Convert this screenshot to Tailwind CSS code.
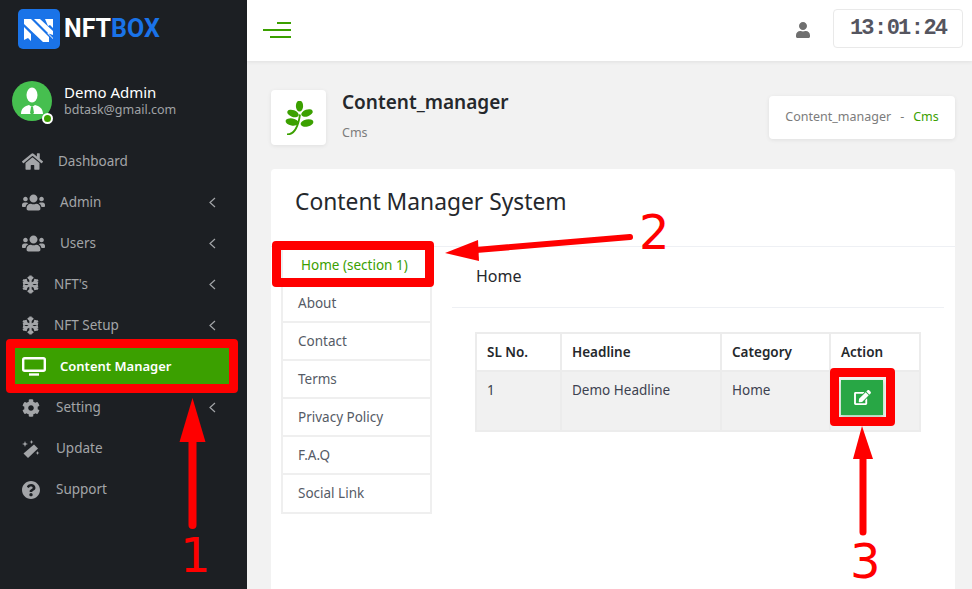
<!DOCTYPE html>
<html lang="en">
<head>
<meta charset="UTF-8">
<title>Content Manager</title>
<script src="https://cdn.jsdelivr.net/npm/@tailwindcss/browser@4"></script>
</head>
<body class="font-['Noto_Sans',sans-serif]">
<div class="relative flex h-[589px] w-[972px] overflow-hidden bg-[#f2f2f2]">

  <!-- sidebar -->
  <aside class="flex w-[247px] shrink-0 flex-col bg-[#1c1f23]">
    <div class="flex h-[61px] items-start pl-[18px] pt-[9px]">
      <svg width="42" height="40" viewBox="0 0 42 40" class="shrink-0">
        <rect width="42" height="40" rx="5" fill="#1a73e8"/>
        <path d="M6 10h7l18 18v5h-6L6 15zM16 10h6l13 12v7zM6 18l7 7v7l-3-3-4 2zM27 10h8v9l-3-3-2 1zM29 24l6 6v-4z" fill="#fff"/>
      </svg>
      <div class="ml-1 mt-[5px] font-['Roboto',sans-serif] text-[25px] leading-[30px] font-bold text-white">NFT<span class="text-[#1a73e8]">BOX</span></div>
    </div>
    <div class="mt-5 flex items-center pl-3">
      <div class="relative h-10 w-10 shrink-0 rounded-full bg-[#46bf4f]">
        <svg width="40" height="40" viewBox="0 0 40 40">
          <ellipse cx="20" cy="14" rx="5.500" ry="7.500" fill="#fff"/>
          <path d="M9 33c0-6 4-8 8-9l3 2 3-2c4 1 8 3 8 9z" fill="#fff"/>
          <path d="M19 26h2l1 6-2 2-2-2z" fill="#46bf4f"/>
        </svg>
        <span class="absolute bottom-[-3px] right-[-1px] h-[11px] w-[11px] rounded-full border-2 border-white bg-[#3ba000]"></span>
      </div>
      <div class="mb-[3px] ml-3">
        <div class="text-[15px] leading-[18px] text-white">Demo Admin</div>
        <div class="mt-px text-[12.500px] leading-[15px] text-[#a0a3a6]">bdtask@gmail.com</div>
      </div>
    </div>
    <nav class="mt-5 flex flex-col text-[13.500px] text-[#a3a5a8]">
      <a class="flex h-[41px] items-center pl-[22px]">
        <svg width="21" height="19" viewBox="0 0 576 512" fill="#a3a5a8"><path d="M280.37 148.26L96 300.11V464a16 16 0 0 0 16 16l112.06-.29a16 16 0 0 0 15.92-16V368a16 16 0 0 1 16-16h64a16 16 0 0 1 16 16v95.64a16 16 0 0 0 16 16.05L464 480a16 16 0 0 0 16-16V300L295.67 148.26a12.19 12.19 0 0 0-15.3 0zM571.6 251.47L488 182.56V44.05a12 12 0 0 0-12-12h-56a12 12 0 0 0-12 12v72.61L318.47 43a48 48 0 0 0-61 0L4.34 251.47a12 12 0 0 0-1.6 16.9l25.5 31A12 12 0 0 0 45.15 301l235.22-193.74a12.19 12.19 0 0 1 15.3 0L530.9 301a12 12 0 0 0 16.9-1.6l25.5-31a12 12 0 0 0-1.7-16.93z"/></svg>
        <span class="ml-[15px]">Dashboard</span>
      </a>
      <a class="flex h-[41px] items-center pl-[22px]">
        <svg width="23" height="19" viewBox="0 0 640 512" fill="#a3a5a8"><path d="M96 224c35.3 0 64-28.7 64-64s-28.7-64-64-64-64 28.7-64 64 28.7 64 64 64zm448 0c35.3 0 64-28.7 64-64s-28.7-64-64-64-64 28.7-64 64 28.7 64 64 64zm32 32h-64c-17.6 0-33.5 7.1-45.1 18.6 40.3 22.1 68.9 62 75.1 109.4h66c17.7 0 32-14.3 32-32v-32c0-35.3-28.7-64-64-64zm-256 0c61.9 0 112-50.1 112-112S381.9 32 320 32 208 82.1 208 144s50.1 112 112 112zm76.8 32h-8.3c-20.8 10-43.9 16-68.5 16s-47.6-6-68.5-16h-8.3C179.6 288 128 339.6 128 403.2V432c0 26.5 21.5 48 48 48h288c26.5 0 48-21.5 48-48v-28.8c0-63.6-51.6-115.2-115.2-115.2zm-223.7-13.4C161.5 263.1 145.6 256 128 256H64c-35.3 0-64 28.7-64 64v32c0 17.7 14.3 32 32 32h65.9c6.3-47.4 34.9-87.3 75.2-109.4z"/></svg>
        <span class="ml-[15px]">Admin</span>
        <svg class="ml-auto mr-[31px]" width="7" height="11" viewBox="0 0 7 11" fill="none" stroke="#a3a5a8" stroke-width="1.200"><path d="M6 1L1 5.500 6 10"/></svg>
      </a>
      <a class="flex h-[41px] items-center pl-[22px]">
        <svg width="23" height="19" viewBox="0 0 640 512" fill="#a3a5a8"><path d="M96 224c35.3 0 64-28.7 64-64s-28.7-64-64-64-64 28.7-64 64 28.7 64 64 64zm448 0c35.3 0 64-28.7 64-64s-28.7-64-64-64-64 28.7-64 64 28.7 64 64 64zm32 32h-64c-17.6 0-33.5 7.1-45.1 18.6 40.3 22.1 68.9 62 75.1 109.4h66c17.7 0 32-14.3 32-32v-32c0-35.3-28.7-64-64-64zm-256 0c61.9 0 112-50.1 112-112S381.9 32 320 32 208 82.1 208 144s50.1 112 112 112zm76.8 32h-8.3c-20.8 10-43.9 16-68.5 16s-47.6-6-68.5-16h-8.3C179.6 288 128 339.6 128 403.2V432c0 26.5 21.5 48 48 48h288c26.5 0 48-21.5 48-48v-28.8c0-63.6-51.6-115.2-115.2-115.2zm-223.7-13.4C161.5 263.1 145.6 256 128 256H64c-35.3 0-64 28.7-64 64v32c0 17.7 14.3 32 32 32h65.9c6.3-47.4 34.9-87.3 75.2-109.4z"/></svg>
        <span class="ml-[15px]">Users</span>
        <svg class="ml-auto mr-[31px]" width="7" height="11" viewBox="0 0 7 11" fill="none" stroke="#a3a5a8" stroke-width="1.200"><path d="M6 1L1 5.500 6 10"/></svg>
      </a>
      <a class="flex h-[41px] items-center pl-[22px]">
        <svg width="17" height="19" viewBox="0 0 17 19" fill="none" stroke="#a3a5a8" stroke-width="2.400"><path d="M8.500 .5v18M1 5l15 9M16 5L1 14M6 2l2.500 2.500L11 2M6 17l2.500-2.500L11 17M1 8.500l3.500-1-1-3.500M16 8.500l-3.500-1 1-3.500M1 10.500l3.500 1-1 3.500M16 10.500l-3.500 1 1 3.500"/></svg>
        <span class="ml-[15px]">NFT's</span>
        <svg class="ml-auto mr-[31px]" width="7" height="11" viewBox="0 0 7 11" fill="none" stroke="#a3a5a8" stroke-width="1.200"><path d="M6 1L1 5.500 6 10"/></svg>
      </a>
      <a class="flex h-[41px] items-center pl-[22px]">
        <svg width="17" height="19" viewBox="0 0 17 19" fill="none" stroke="#a3a5a8" stroke-width="2.400"><path d="M8.500 .5v18M1 5l15 9M16 5L1 14M6 2l2.500 2.500L11 2M6 17l2.500-2.500L11 17M1 8.500l3.500-1-1-3.500M16 8.500l-3.500-1 1-3.500M1 10.500l3.500 1-1 3.500M16 10.500l-3.500 1 1 3.500"/></svg>
        <span class="ml-[15px]">NFT Setup</span>
        <svg class="ml-auto mr-[31px]" width="7" height="11" viewBox="0 0 7 11" fill="none" stroke="#a3a5a8" stroke-width="1.200"><path d="M6 1L1 5.500 6 10"/></svg>
      </a>
      <a class="mx-[15px] flex h-[41px] items-center bg-[#3ba000] pl-[7px] text-[13px] font-semibold text-white">
        <svg width="24" height="19" viewBox="0 0 24 19" fill="none" stroke="#fff"><rect x="1.200" y="1.200" width="21.600" height="12.600" rx="1.500" stroke-width="2.400"/><path d="M7 17.500h10" stroke-width="2.400"/></svg>
        <span class="ml-[14px]">Content Manager</span>
      </a>
      <a class="flex h-[41px] items-center pl-[22px]">
        <svg width="18" height="18" viewBox="0 0 512 512" fill="#a3a5a8"><path d="M487.4 315.7l-42.6-24.6c4.3-23.2 4.3-47 0-70.2l42.6-24.6c4.9-2.8 7.1-8.6 5.5-14-11.1-35.6-30-67.8-54.7-94.6-3.8-4.1-10-5.1-14.8-2.3L380.8 110c-17.9-15.4-38.5-27.3-60.8-35.1V25.8c0-5.6-3.9-10.5-9.4-11.7-36.7-8.2-74.3-7.8-109.2 0-5.5 1.2-9.4 6.1-9.4 11.7V75c-22.2 7.9-42.8 19.8-60.8 35.1L88.7 85.5c-4.9-2.8-11-1.9-14.8 2.3-24.7 26.7-43.6 58.9-54.7 94.6-1.7 5.4.6 11.2 5.5 14L67.3 221c-4.3 23.2-4.3 47 0 70.2l-42.6 24.6c-4.9 2.8-7.1 8.6-5.5 14 11.1 35.6 30 67.8 54.7 94.6 3.8 4.1 10 5.1 14.8 2.3l42.6-24.6c17.9 15.4 38.5 27.3 60.8 35.1v49.2c0 5.6 3.9 10.5 9.4 11.7 36.7 8.2 74.3 7.8 109.2 0 5.5-1.2 9.4-6.1 9.4-11.7v-49.2c22.2-7.9 42.8-19.8 60.8-35.1l42.6 24.6c4.9 2.8 11 1.9 14.8-2.3 24.7-26.7 43.6-58.9 54.7-94.6 1.5-5.5-.7-11.3-5.6-14.1zM256 336c-44.1 0-80-35.9-80-80s35.9-80 80-80 80 35.9 80 80-35.9 80-80 80z"/></svg>
        <span class="ml-4">Setting</span>
        <svg class="ml-auto mr-[31px]" width="7" height="11" viewBox="0 0 7 11" fill="none" stroke="#a3a5a8" stroke-width="1.200"><path d="M6 1L1 5.500 6 10"/></svg>
      </a>
      <a class="flex h-[41px] items-center pl-[22px]">
        <svg width="18" height="18" viewBox="0 0 18 18" fill="#a3a5a8"><path d="M12 4.500l4 4L6 18l-4.500-4.500z"/><path d="M3 1l.8 2.200L6 4l-2.200.8L3 7l-.8-2.200L0 4l2.200-.8zM9.500 0l.6 1.400 1.400.6-1.400.6-.6 1.400-.6-1.400L7.500 2l1.400-.6zM15.500 11l.6 1.400 1.400.6-1.400.6-.6 1.400-.6-1.400-1.400-.6 1.400-.6z"/></svg>
        <span class="ml-4">Update</span>
      </a>
      <a class="flex h-[41px] items-center pl-[22px]">
        <svg width="18" height="18" viewBox="8 8 496 496" fill="#a3a5a8"><path d="M504 256c0 136.997-111.043 248-248 248S8 392.997 8 256C8 119.083 119.043 8 256 8s248 111.083 248 248zM262.655 90c-54.497 0-89.255 22.957-116.549 63.758-3.536 5.286-2.353 12.415 2.715 16.258l34.699 26.31c5.205 3.947 12.621 3.008 16.665-2.122 17.864-22.658 30.113-35.797 57.303-35.797 20.429 0 45.698 13.148 45.698 32.958 0 14.976-12.363 22.667-32.534 33.976C247.128 238.528 216 254.941 216 296v4c0 6.627 5.373 12 12 12h56c6.627 0 12-5.373 12-12v-1.333c0-28.462 83.186-29.647 83.186-106.667 0-58.002-60.165-102-116.531-102zM256 338c-25.365 0-46 20.635-46 46 0 25.364 20.635 46 46 46s46-20.636 46-46c0-25.365-20.635-46-46-46z"/></svg>
        <span class="ml-4">Support</span>
      </a>
    </nav>
  </aside>

  <!-- main -->
  <div class="flex min-w-0 flex-1 flex-col">
    <header class="flex h-[61px] shrink-0 items-center bg-white pl-4 pr-[9px] shadow-[0_1px_4px_rgba(0,0,0,0.08)]">
      <div class="-mt-[2px] flex w-7 flex-col items-end gap-[5px]">
        <span class="h-[2px] w-[14px] bg-[#3ba000]"></span>
        <span class="h-[2px] w-7 bg-[#3ba000]"></span>
        <span class="h-[2px] w-[21px] bg-[#3ba000]"></span>
      </div>
      <svg class="-mt-[2px] ml-auto" width="14" height="16" viewBox="0 0 448 512" fill="#6f6f6f"><path d="M224 256c70.700 0 128-57.300 128-128S294.700 0 224 0 96 57.300 96 128s57.300 128 128 128zm89.600 32h-16.700c-22.200 10.200-46.900 16-72.900 16s-50.600-5.800-72.900-16h-16.700C60.200 288 0 348.200 0 422.400V464c0 26.500 21.500 48 48 48h352c26.500 0 48-21.500 48-48v-41.600c0-74.200-60.200-134.400-134.400-134.400z"/></svg>
      <div class="-mt-[4px] ml-[23px] flex h-[39px] w-[130px] items-center justify-between whitespace-nowrap rounded-[4px] border border-[#e9e9e9] px-[16px] font-['Liberation_Mono',monospace] text-[22px] font-bold tracking-[-2px] text-[#55555f]">
        <span>13</span><span>:</span><span>01</span><span>:</span><span>24</span>
      </div>
    </header>

    <main class="flex min-h-0 flex-1 flex-col px-[24px] pt-[29px] pr-[17px]">
      <div class="flex items-start">
        <div class="flex h-[55px] w-[55px] items-center justify-center rounded-[4px] bg-white shadow-[0_1px_4px_rgba(0,0,0,0.08)]">
          <svg width="30" height="34" viewBox="0 0 30 34" fill="#3ba000">
            <path d="M3 33.500c7 0 11-6 13-20" fill="none" stroke="#3ba000" stroke-width="1.800"/>
            <ellipse cx="15.500" cy="5" rx="3.600" ry="5.500"/>
            <ellipse cx="9" cy="12.500" rx="6" ry="3.400" transform="rotate(20 9 12.500)"/>
            <ellipse cx="23" cy="12" rx="6" ry="3.400" transform="rotate(-20 23 12)"/>
            <ellipse cx="8" cy="21" rx="6.500" ry="3.500" transform="rotate(10 8 21)"/>
            <ellipse cx="23" cy="22" rx="6.500" ry="3.500" transform="rotate(-12 23 22)"/>
          </svg>
        </div>
        <div class="ml-4">
          <h1 class="text-[19px] leading-[24px] font-semibold text-[#25282c]">Content_manager</h1>
          <p class="mt-[11px] text-[12.500px] leading-[16px] text-[#7c7c7c]">Cms</p>
        </div>
        <div class="ml-auto mt-[6px] flex h-[43px] w-[186px] items-center justify-center rounded-[4px] bg-white text-[12.500px] text-[#7c7c7c] shadow-[0_1px_4px_rgba(0,0,0,0.08)]">
          Content_manager<span class="mx-[9px]">-</span><span class="text-[#3ba000]">Cms</span>
        </div>
      </div>

      <section class="mt-6 flex min-h-0 flex-1 flex-col rounded-t-[4px] bg-white">
        <div class="h-[78px] shrink-0 border-b border-[#eef0f4] pl-6 pt-[16px]">
          <h2 class="text-[22.800px] leading-[34px] text-[#25282c]">Content Manager System</h2>
        </div>
        <div class="flex pl-[10px] pr-[11px]">
          <ul class="w-[151px] shrink-0 border-x-2 border-b-2 border-[#efefef] text-[13.500px] text-[#555b66]">
            <li class="flex h-[38px] items-center border-b-2 border-[#efefef] pl-[18px] text-[#3ba000]">Home (section 1)</li>
            <li class="flex h-[38px] items-center border-b-2 border-[#efefef] pl-[15px]">About</li>
            <li class="flex h-[38px] items-center border-b-2 border-[#efefef] pl-[15px]">Contact</li>
            <li class="flex h-[38px] items-center border-b-2 border-[#efefef] pl-[15px]">Terms</li>
            <li class="flex h-[38px] items-center border-b-2 border-[#efefef] pl-[15px]">Privacy Policy</li>
            <li class="flex h-[38px] items-center border-b-2 border-[#efefef] pl-[15px]">F.A.Q</li>
            <li class="flex h-[37px] items-center pl-[15px]">Social Link</li>
          </ul>
          <div class="ml-5 min-w-0 flex-1">
            <h3 class="h-[61px] border-b border-[#eef0f4] pl-6 pt-[16px] text-[16px] leading-[26px] text-[#25282c]">Home</h3>
            <table class="ml-[23px] mt-6 w-[446px] table-fixed border-collapse text-[13.500px] text-[#3d4250]">
              <thead>
                <tr class="h-[38px] text-left font-semibold text-[#25282c]">
                  <th class="w-[85px] border-2 border-[#ececec] pl-[10px] font-semibold">SL No.</th>
                  <th class="w-[160px] border-2 border-[#ececec] pl-[10px] font-semibold">Headline</th>
                  <th class="w-[109px] border-2 border-[#ececec] pl-[10px] font-semibold">Category</th>
                  <th class="border-2 border-[#ececec] pl-[10px] font-semibold">Action</th>
                </tr>
              </thead>
              <tbody>
                <tr class="h-[60px] bg-[#f1f1f1] align-top">
                  <td class="border-2 border-[#ececec] pl-[10px] pt-2">1</td>
                  <td class="border-2 border-[#ececec] pl-[10px] pt-2">Demo Headline</td>
                  <td class="border-2 border-[#ececec] pl-[10px] pt-2">Home</td>
                  <td class="border-2 border-[#ececec] pl-[10px] pt-2">
                    <div class="flex h-[35px] w-[42px] items-center justify-center bg-[#28a745] shadow-[0_2px_4px_rgba(40,167,69,0.4)]">
                      <svg width="17" height="15" viewBox="0 0 576 512" fill="#fff"><path d="M402.600 83.200l90.200 90.200c3.800 3.800 3.800 10 0 13.800L274.400 405.600l-92.800 10.300c-12.400 1.400-22.900-9.100-21.500-21.500l10.300-92.800L388.800 83.200c3.800-3.800 10-3.800 13.800 0zm162-22.900l-48.800-48.800c-15.200-15.200-39.900-15.200-55.200 0l-35.400 35.400c-3.800 3.800-3.800 10 0 13.800l90.200 90.200c3.800 3.800 10 3.800 13.800 0l35.400-35.400c15.200-15.300 15.200-40 0-55.200zM384 346.200V448H64V128h229.800c3.200 0 6.200-1.300 8.500-3.500l40-40c7.600-7.600 2.200-20.500-8.500-20.500H48C21.500 64 0 85.500 0 112v352c0 26.500 21.500 48 48 48h352c26.500 0 48-21.500 48-48V306.200c0-10.700-12.900-16-20.500-8.500l-40 40c-2.200 2.300-3.500 5.300-3.500 8.500z"/></svg>
                    </div>
                  </td>
                </tr>
              </tbody>
            </table>
          </div>
        </div>
      </section>
    </main>
  </div>

  <!-- tutorial annotations drawn over the page -->
  <div class="absolute left-[6px] top-[339px] h-[54px] w-[232px] rounded-[4px] border-[9px] border-[#f00]"></div>
  <div class="absolute left-[272px] top-[241px] h-[46px] w-[162px] rounded-[4px] border-[9px] border-[#f00]"></div>
  <div class="absolute left-[830px] top-[368px] h-[58px] w-[65px] rounded-[4px] border-[9px] border-[#f00]"></div>
  <svg class="absolute left-0 top-0" width="972" height="589" fill="#f00" stroke="none">
    <path d="M192.500 398l13 44h-26z"/>
    <path d="M192.500 440v85" stroke="#f00" stroke-width="8" stroke-linecap="round"/>
    <path d="M445 253l33-13 1 21z"/>
    <path d="M476 250l154-13" stroke="#f00" stroke-width="6" stroke-linecap="round"/>
    <path d="M862 426l11 33h-20z"/>
    <path d="M863 457v75" stroke="#f00" stroke-width="7" stroke-linecap="round"/>
  </svg>
  <span class="absolute left-[180px] top-[525px] font-['DejaVu_Sans',sans-serif] text-[48px] leading-[60px] text-[#f00]">1</span>
  <span class="absolute left-[639px] top-[202px] font-['DejaVu_Sans',sans-serif] text-[48px] leading-[60px] text-[#f00]">2</span>
  <span class="absolute left-[850px] top-[531px] font-['DejaVu_Sans',sans-serif] text-[48px] leading-[60px] text-[#f00]">3</span>
</div>
</body>
</html>
